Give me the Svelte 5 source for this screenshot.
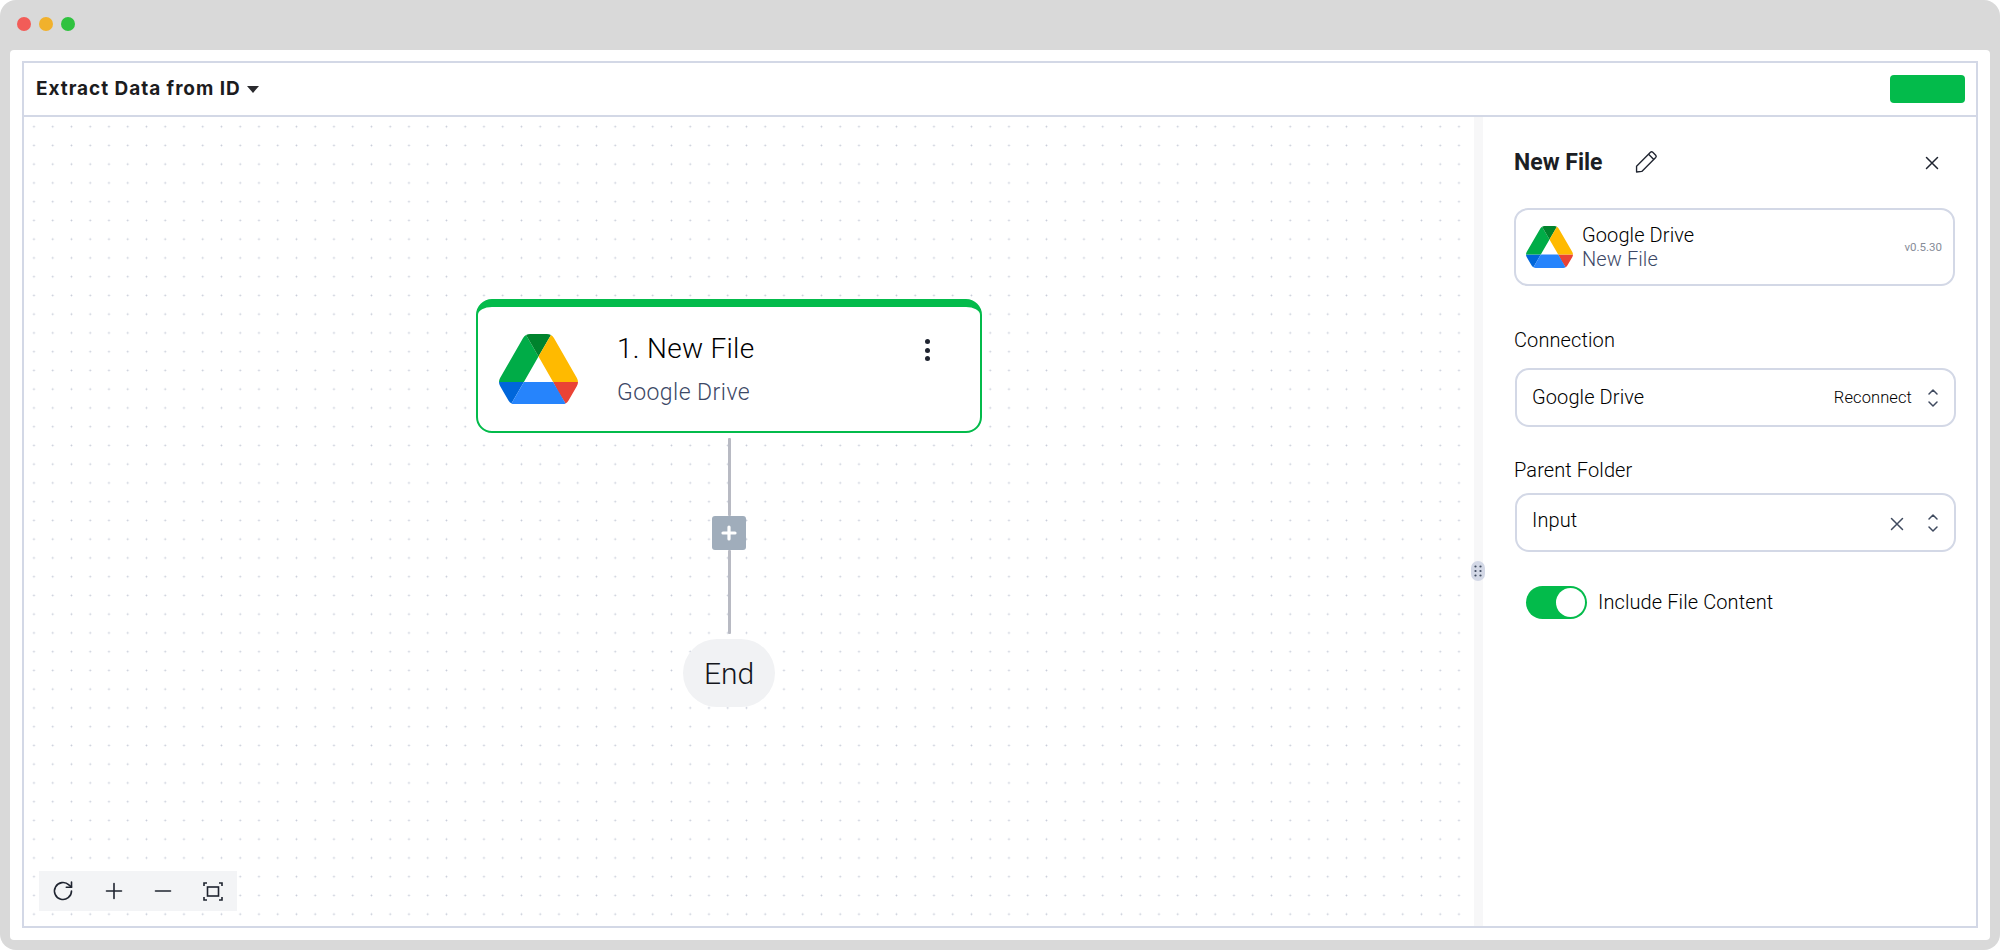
<script lang="ts">
  const green = "#03bb4b";
</script>

{#snippet driveLogo(w)}
  <svg class="drive" width={w} viewBox="0 0 87.3 78" aria-label="Google Drive">
    <path d="m6.6 66.85 3.85 6.65c.8 1.4 1.95 2.5 3.3 3.3l13.75-23.8h-27.5c0 1.55.4 3.1 1.2 4.5z" fill="#0066da" />
    <path d="m43.65 25-13.75-23.8c-1.35.8-2.5 1.9-3.3 3.3l-25.4 44a9.06 9.06 0 0 0 -1.2 4.5h27.5z" fill="#00ac47" />
    <path d="m73.55 76.8c1.35-.8 2.5-1.9 3.3-3.3l1.6-2.75 7.65-13.25c.8-1.4 1.2-2.95 1.2-4.5h-27.502l5.852 11.5z" fill="#ea4335" />
    <path d="m43.65 25 13.75-23.8c-1.35-.8-2.9-1.2-4.5-1.2h-18.5c-1.6 0-3.15.45-4.5 1.2z" fill="#00832d" />
    <path d="m59.8 53h-32.3l-13.75 23.8c1.35.8 2.9 1.2 4.5 1.2h50.8c1.6 0 3.15-.45 4.5-1.2z" fill="#2684fc" />
    <path d="m73.4 26.5-12.7-22c-.8-1.4-1.95-2.5-3.3-3.3l-13.75 23.8 16.15 28h27.45c0-1.55-.4-3.1-1.2-4.5z" fill="#ffba00" />
  </svg>
{/snippet}

{#snippet updown()}
  <svg width="12" height="20" viewBox="0 0 12 20" fill="none" stroke="#3f4a5f" stroke-width="1.5" stroke-linecap="round" stroke-linejoin="round">
    <path d="M2 6 6 2l4 4" />
    <path d="M2 14l4 4 4-4" />
  </svg>
{/snippet}

<div class="window">
  <div class="titlebar">
    <span class="light red"></span>
    <span class="light amber"></span>
    <span class="light lime"></span>
  </div>
  <div class="page">
    <div class="frame">
      <header class="topbar">
        <div class="flow-name">
          <span>Extract Data from ID</span>
          <span class="caret"></span>
        </div>
        <div class="publish" style:background={green}></div>
      </header>
      <div class="body">
        <div class="canvas">
          <div class="flow">
            <div class="step">
              {@render driveLogo(79)}
              <div class="step-text">
                <div class="step-title">1. New File</div>
                <div class="step-sub">Google Drive</div>
              </div>
              <div class="kebab"><i></i><i></i><i></i></div>
            </div>
            <div class="wire wire-top"></div>
            <div class="add">
              <svg width="16" height="16" viewBox="0 0 16 16" stroke="#fff" stroke-width="3.2" stroke-linecap="round"><path d="M8 2v12M2 8h12" /></svg>
            </div>
            <div class="wire wire-bottom"></div>
            <div class="end">End</div>
          </div>
          <div class="zoombar">
            <svg width="22" height="22" viewBox="0 0 22 22" fill="none" stroke="#1f2430" stroke-width="1.6" stroke-linecap="round" stroke-linejoin="round">
              <path d="M19.5 11a8.5 8.5 0 1 1-2.6-6.1L19.5 7.2" />
              <path d="M19.5 2v5.2h-5.2" />
            </svg>
            <svg width="18" height="18" viewBox="0 0 18 18" stroke="#1f2430" stroke-width="1.6" stroke-linecap="round"><path d="M9 1.5v15M1.5 9h15" /></svg>
            <svg width="18" height="18" viewBox="0 0 18 18" stroke="#1f2430" stroke-width="1.6" stroke-linecap="round"><path d="M1.5 9h15" /></svg>
            <svg width="20" height="19" viewBox="0 0 20 19" fill="none" stroke="#1f2430" stroke-width="1.6">
              <path d="M1 4V1h3M16 1h3v3M19 15v3h-3M4 18H1v-3" />
              <rect x="4.5" y="5" width="11" height="9" />
            </svg>
          </div>
        </div>
        <aside class="panel">
          <div class="handle">
            <svg width="8" height="12" viewBox="0 0 8 12" fill="#3f4a5f">
              {#each [1.5, 6, 10.5] as y}
                <circle cx="1.5" cy={y} r="1.1" />
                <circle cx="6.5" cy={y} r="1.1" />
              {/each}
            </svg>
          </div>
          <div class="panel-head">
            <h2>New File</h2>
            <svg class="pencil" width="23" height="23" viewBox="0 0 22 22" fill="none" stroke="#1f2430" stroke-width="1.3" stroke-linejoin="round">
              <path d="M1.5 15.5 14.8 2.2a1.6 1.6 0 0 1 2.2 0l2.8 2.8a1.6 1.6 0 0 1 0 2.2L6.5 20.5l-5 .5z" />
              <path d="M13 4l5 5" />
            </svg>
            <svg class="close" width="14" height="14" viewBox="0 0 14 14" stroke="#1f2430" stroke-width="1.5" stroke-linecap="round"><path d="M1.5 1.5l11 11M12.5 1.5l-11 11" /></svg>
          </div>

          <div class="piece">
            {@render driveLogo(47)}
            <div class="piece-text">
              <div class="piece-name">Google Drive</div>
              <div class="piece-trigger">New File</div>
            </div>
            <span class="version">v0.5.30</span>
          </div>

          <div class="field-label first">Connection</div>
          <div class="select">
            <span class="value">Google Drive</span>
            <span class="reconnect">Reconnect</span>
            {@render updown()}
          </div>

          <div class="field-label">Parent Folder</div>
          <div class="select">
            <span class="value input">Input</span>
            <svg class="clear" width="14" height="14" viewBox="0 0 14 14" stroke="#3f4a5f" stroke-width="1.5" stroke-linecap="round"><path d="M1.5 1.5l11 11M12.5 1.5l-11 11" /></svg>
            {@render updown()}
          </div>

          <div class="toggle-row">
            <div class="toggle" style:background={green}><span class="knob"></span></div>
            <span class="toggle-label">Include File Content</span>
          </div>
        </aside>
      </div>
    </div>
  </div>
</div>

<style>
  :global(body) {
    margin: 0;
    background: #fff;
    font-family: Roboto, "Liberation Sans", sans-serif;
    color: #14161c;
  }

  .window {
    width: 2000px;
    height: 950px;
    box-sizing: border-box;
    background: #d9d9d9;
    border-radius: 16px;
    display: flex;
    flex-direction: column;
    padding: 0 10px 10px;
  }

  .titlebar {
    height: 50px;
    flex-shrink: 0;
    display: flex;
    align-items: center;
    gap: 8px;
    padding-left: 7px;
    box-sizing: border-box;
    padding-bottom: 2px;
  }

  .light {
    width: 14px;
    height: 14px;
    border-radius: 50%;
  }
  .red { background: #f25c58; }
  .amber { background: #f1b12c; }
  .lime { background: #2fc23f; }

  .page {
    flex: 1;
    min-height: 0;
    background: #fff;
    border-radius: 4px;
    padding: 11px 12px 12px 12px;
    display: flex;
  }

  .frame {
    flex: 1;
    min-width: 0;
    border: 2px solid #d3d8e6;
    display: flex;
    flex-direction: column;
  }

  .topbar {
    height: 51px;
    padding: 0 11px 1px 12px;
    flex-shrink: 0;
    box-sizing: content-box;
    border-bottom: 2px solid #d3d8e6;
    display: flex;
    align-items: center;
    justify-content: space-between;
  }

  .flow-name {
    display: flex;
    align-items: center;
    gap: 6px;
    font-family: Inter, sans-serif;
    font-weight: 700;
    font-size: 19px;
    letter-spacing: 0.95px;
    color: #1c1c1e;
  }

  .caret {
    width: 0;
    height: 0;
    border-left: 6px solid transparent;
    border-right: 6px solid transparent;
    border-top: 7px solid #2a2a2e;
    margin-top: 1px;
  }

  .publish {
    width: 75px;
    height: 28px;
    border-radius: 4px;
  }

  .body {
    flex: 1;
    min-height: 0;
    display: flex;
  }

  .canvas {
    flex: 1;
    position: relative;
    background-color: #fff;
    background-image: radial-gradient(circle, #c4c9d6 0.8px, transparent 1.1px);
    background-size: 18.75px 18.75px;
    background-position: 0.6px 0.3px;
  }

  .flow {
    position: absolute;
    left: 452px;
    top: 182px;
    width: 506px;
    display: flex;
    flex-direction: column;
    align-items: center;
  }

  .step {
    width: 100%;
    height: 134px;
    box-sizing: border-box;
    background: #fff;
    border: 2px solid #03bb4b;
    border-top-width: 8px;
    border-radius: 16px;
    display: flex;
    align-items: center;
    padding: 0 0 0 21px;
  }

  .step-text {
    margin-left: 39px;
    flex: 1;
    display: flex;
    flex-direction: column;
    gap: 14px;
    margin-top: 2px;
  }

  .step-title {
    font-size: 28px;
    line-height: 32px;
    color: #000;
    font-weight: 300;
    letter-spacing: 0.3px;
  }

  .step-sub {
    font-size: 23px;
    line-height: 28px;
    color: #3c4866;
    font-weight: 300;
    letter-spacing: 0.45px;
  }

  .kebab {
    align-self: flex-start;
    display: flex;
    flex-direction: column;
    gap: 3.7px;
    margin-right: 50px;
    margin-top: 32px;
  }

  .kebab i {
    width: 5px;
    height: 5px;
    border-radius: 50%;
    background: #1f2430;
  }

  .wire {
    width: 3px;
    background: #b8bac3;
    border-radius: 1px;
  }
  .wire-top {
    margin-top: 5px;
    height: 78px;
  }
  .wire-bottom {
    height: 84px;
  }

  .add {
    width: 34px;
    height: 34px;
    border-radius: 3px;
    background: #a0adbb;
    display: flex;
    align-items: center;
    justify-content: center;
  }

  .end {
    margin-top: 5px;
    width: 92px;
    height: 68px;
    border-radius: 34px;
    background: #f1f2f4;
    display: flex;
    align-items: center;
    justify-content: center;
    font-size: 30px;
    font-weight: 300;
    color: #14161c;
  }

  .zoombar {
    position: absolute;
    left: 15px;
    bottom: 15px;
    width: 198px;
    height: 40px;
    box-sizing: border-box;
    background: #f3f4f6;
    display: flex;
    align-items: center;
    justify-content: space-between;
    padding: 0 14px 0 13px;
  }

  .panel {
    width: 502px;
    flex-shrink: 0;
    box-sizing: border-box;
    position: relative;
    background: #fff;
    border-left: 9px solid #f7f7f8;
    padding: 0 21px 0 31px;
    font-size: 20px;
  }

  .handle {
    position: absolute;
    left: -12px;
    top: 444px;
    width: 14px;
    height: 20px;
    border-radius: 7px;
    background: #d3d8e6;
    display: flex;
    align-items: center;
    justify-content: center;
  }

  .panel-head {
    height: 91px;
    display: flex;
    align-items: center;
  }

  .panel-head h2 {
    margin: 0;
    font-size: 23px;
    font-weight: 700;
    color: #1c1e24;
  }

  .pencil {
    margin-left: 33px;
    margin-top: -3px;
  }

  .close {
    margin-left: auto;
    margin-right: 16px;
    margin-top: 1px;
  }

  .piece {
    height: 78px;
    box-sizing: border-box;
    border: 2px solid #d3d8e6;
    border-radius: 14px;
    display: flex;
    align-items: center;
    padding: 0 11px 0 10px;
  }

  .piece-text {
    margin-left: 9px;
    flex: 1;
    font-size: 20px;
    line-height: 24px;
    font-weight: 300;
    letter-spacing: 0.1px;
    color: #000;
  }

  .piece-trigger {
    color: #3c4866;
  }

  .version {
    font-size: 11.5px;
    color: #868c98;
  }

  .field-label {
    margin-top: 31px;
    margin-bottom: 11px;
    font-size: 20px;
    line-height: 24px;
    font-weight: 300;
    letter-spacing: 0.1px;
    color: #000;
  }

  .field-label.first {
    margin-top: 42px;
    margin-bottom: 16px;
  }

  .select {
    height: 59px;
    box-sizing: border-box;
    border: 2px solid #d3d8e6;
    border-radius: 14px;
    display: flex;
    align-items: center;
    padding: 0 15px 0 15px;
    margin-left: 1px;
    margin-right: -1px;
  }

  .value {
    flex: 1;
    font-size: 20px;
    font-weight: 300;
    letter-spacing: 0.1px;
    color: #000;
    margin-top: -2px;
  }

  .value.input {
    margin-top: -5px;
  }

  .reconnect {
    font-size: 16.5px;
    font-weight: 300;
    letter-spacing: 0.1px;
    color: #000;
    margin-right: 15px;
  }

  .clear {
    margin-right: 23px;
    margin-top: 3px;
  }

  .toggle-row {
    margin-top: 34px;
    margin-left: 12px;
    display: flex;
    align-items: center;
    gap: 11px;
    font-size: 20px;
    color: #000;
  }

  .toggle-label {
    font-weight: 300;
    letter-spacing: 0.1px;
    margin-top: -2px;
  }

  .toggle {
    width: 61px;
    height: 33px;
    border-radius: 17px;
    position: relative;
  }

  .knob {
    position: absolute;
    right: 2px;
    top: 2px;
    width: 29px;
    height: 29px;
    border-radius: 50%;
    background: #fff;
  }
</style>
